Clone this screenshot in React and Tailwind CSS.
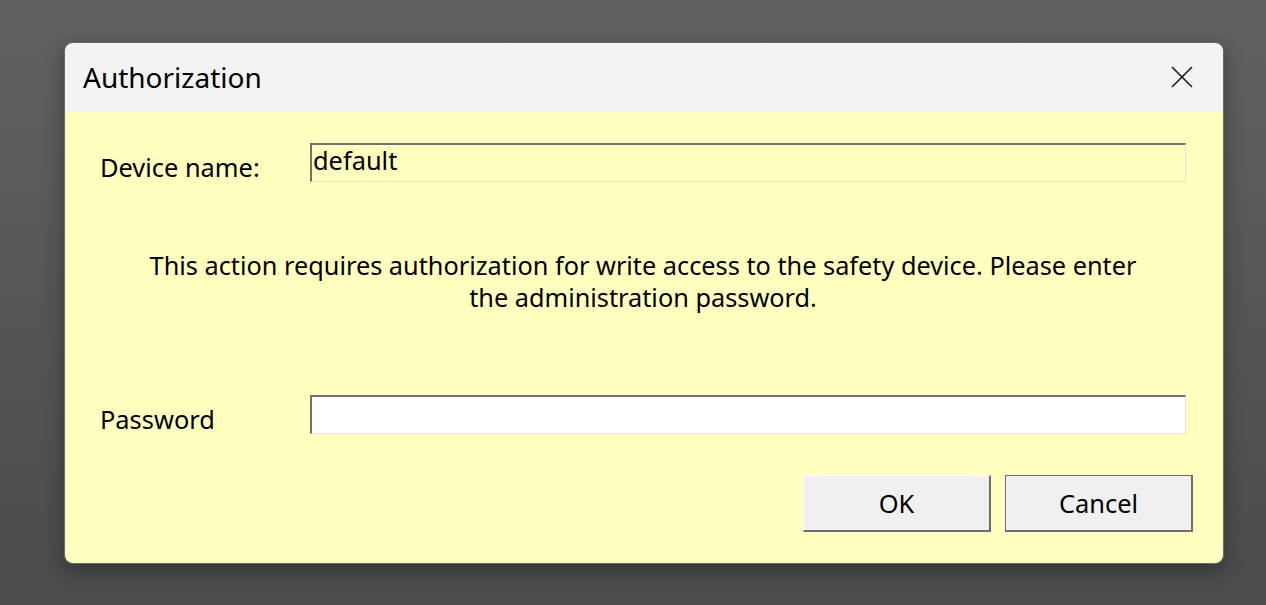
import React from "react";

export default function App() {
  return (
    <div className="w-[1266px] h-[605px] overflow-hidden bg-gradient-to-b from-[#616162] to-[#4b4b4d] pt-[42px] pl-[64px]" style={{ fontFamily: '"Noto Sans", sans-serif' }}>
      <div className="w-[1160px] h-[522px] rounded-[9px] border border-[#6a6a6a] overflow-hidden shadow-[0_6px_20px_rgba(0,0,0,0.35)] flex flex-col">
        <div className="h-[69px] bg-[#f3f3f3] flex items-center justify-between pl-[18px] pr-[30px]">
          <span className="text-[28px] text-black leading-none pb-[1px]">Authorization</span>
          <svg width="22" height="22" viewBox="0 0 22 22" className="mb-[1px]">
            <path d="M1 1 L21 21 M21 1 L1 21" stroke="#1a1a1a" strokeWidth="1.6" fill="none" />
          </svg>
        </div>
        <div className="flex-1 bg-[#ffffc0] flex flex-col pl-[35px] pr-[37px] pt-[27px]">
          <div className="flex items-center">
            <span className="w-[210px] text-[25.4px] leading-[36px] text-black pt-[10px]">Device name:</span>
            <div className="flex-1 h-[39px] bg-[#ffffc0] border-t-2 border-l-2 border-[#727272] border-b border-r border-b-[#e3e3e3] border-r-[#e3e3e3] flex items-center pl-[1px]">
              <span className="text-[25.4px] text-black leading-none -mt-[3px]">default</span>
            </div>
          </div>
          <div className="mt-[64px] text-center text-[25.3px] leading-[32px] text-black">
            This action requires authorization for write access to the safety device. Please enter<br />the administration password.
          </div>
          <div className="flex items-center mt-[78px]">
            <span className="w-[210px] text-[25.4px] leading-[36px] text-black pt-[10px]">Password</span>
            <div className="flex-1 h-[39px] bg-white border-t-2 border-l-2 border-[#727272] border-b border-r border-b-[#e3e3e3] border-r-[#e3e3e3]"></div>
          </div>
          <div className="flex justify-end gap-[14px] mt-[38px] -mr-[7px]">
            <button className="w-[188px] h-[57px] bg-[#f0f0f0] border-t border-l border-[#fcfcfc] border-b-2 border-r-2 border-b-[#6e6e6e] border-r-[#6e6e6e] text-[25.4px] text-black">OK</button>
            <button className="w-[188px] h-[57px] bg-[#f0f0f0] border border-[#6e6e6e] border-b-2 border-r-2 text-[25.4px] text-black">Cancel</button>
          </div>
        </div>
      </div>
    </div>
  );
}
